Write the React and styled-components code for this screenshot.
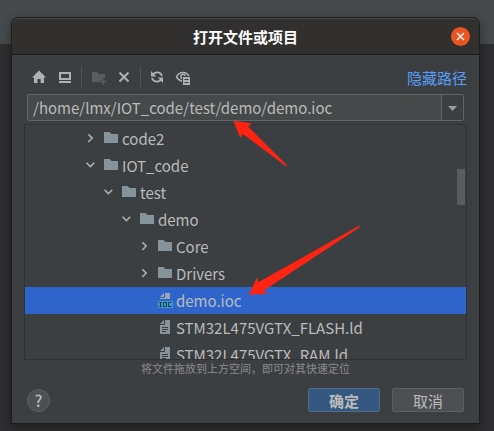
import React from 'react';
import styled, { createGlobalStyle } from 'styled-components';

const Global = createGlobalStyle`
  * { box-sizing: border-box; }
  body { margin: 0; overflow: hidden; }
`;

const Desktop = styled.div`
  position: relative;
  width: 494px;
  height: 431px;
  padding: 18px 0 0 12px;
  overflow: hidden;
  background: linear-gradient(#45494b 0 44px, #2e2e30 44px);
  font-family: 'Noto Sans CJK SC', sans-serif;
  font-size: 15px;
  color: #bbbbbb;
`;

const Dialog = styled.section`
  width: 467px;
  height: 405px;
  display: flex;
  flex-direction: column;
  background: #3c3f41;
  border-radius: 7px 7px 0 0;
  box-shadow: 0 0 0 1px #1d1d1e, 0 3px 10px 2px rgba(0, 0, 0, 0.3);
`;

const TitleBar = styled.header`
  height: 37px;
  flex: none;
  display: grid;
  grid-template-columns: 37px 1fr 37px;
  align-items: center;
  justify-items: center;
  background: #322f2f;
  border-top: 1px solid #484646;
  border-bottom: 1px solid #1c1b1b;
  border-radius: 7px 7px 0 0;
`;

const Title = styled.h1`
  grid-column: 2;
  margin: 1px 0 0;
  font-size: 15px;
  line-height: 22px;
  font-weight: 700;
  color: #ffffff;
`;

const Close = styled.button`
  width: 19px;
  height: 19px;
  margin: 0 0 1px;
  padding: 0;
  display: grid;
  place-items: center;
  border: 0;
  border-radius: 50%;
  background: #e95420;
`;

const Content = styled.div`
  flex: 1;
  min-height: 0;
  display: flex;
  flex-direction: column;
  padding: 0 12px;
`;

const Toolbar = styled.div`
  height: 39px;
  flex: none;
  display: flex;
  align-items: center;
  padding-top: 5px;
`;

const Tool = styled.span`
  width: 16px;
  height: 16px;
  margin-left: ${(p) => p.$gap}px;
  display: block;
  color: ${(p) => (p.$disabled ? '#5c5c5d' : '#afb1b3')};
  svg { display: block; }
`;

const Separator = styled.i`
  width: 1px;
  height: 20px;
  margin-left: ${(p) => p.$gap}px;
  background: #515355;
`;

const PathLink = styled.a`
  margin: 1px 0 0 auto;
  line-height: 22px;
  color: #589df6;
`;

const PathField = styled.div`
  height: 27px;
  flex: none;
  margin: 0 3px;
  display: flex;
  border: 1px solid #646464;
  border-radius: 2px;
  background: #45494a;
`;

const PathText = styled.span`
  flex: 1;
  padding-left: 5px;
  line-height: 25px;
  white-space: nowrap;
`;

const PathArrow = styled.span`
  width: 22px;
  padding-top: 2px;
  display: grid;
  place-items: center;
  border-left: 1px solid #646464;
  background: #3c3f41;
`;

const Tree = styled.div`
  height: 236px;
  flex: none;
  margin-top: 3px;
  display: flex;
  border: 1px solid #323232;
  position: relative;
`;

const Rows = styled.div`
  flex: 1;
  overflow: hidden;
`;

const Row = styled.div`
  height: 27px;
  display: flex;
  align-items: center;
  padding: 0 0 1px ${(p) => 57 + p.$depth * 18}px;
  background: ${(p) => (p.$selected ? '#2f65ca' : 'transparent')};
  svg { flex: none; }
`;

const Chevron = styled.span`
  width: 16px;
  height: 16px;
  margin-right: 5px;
  svg { display: block; }
`;

const Label = styled.span`
  margin: 2px 0 0 3px;
  line-height: 24px;
  white-space: nowrap;
`;

const Thumb = styled.i`
  position: absolute;
  right: 1px;
  top: 44px;
  width: 8px;
  height: 36px;
  background: #595b5d;
`;

const Hint = styled.p`
  margin: 0;
  text-align: center;
  font-size: 11px;
  line-height: 17px;
  color: #8c8c8c;
`;

const Footer = styled.footer`
  height: 24px;
  margin: 11px 3px 0;
  display: flex;
  align-items: center;
  gap: 12px;
`;

const Help = styled.button`
  width: 23px;
  height: 23px;
  margin: 0 auto 0 0;
  padding: 0;
  border: 1px solid #5e6060;
  border-radius: 50%;
  background: #4c5052;
  color: #bbbbbb;
  font: 500 16px/20px 'Noto Sans CJK SC', sans-serif;
`;

const Button = styled.button`
  width: 72px;
  height: 24px;
  padding: 2px 0 0;
  border: 1px solid ${(p) => (p.$primary ? '#4c708c' : '#5e6060')};
  border-radius: 2px;
  background: ${(p) => (p.$primary ? '#365880' : '#4c5052')};
  color: #bbbbbb;
  font: ${(p) => (p.$primary ? 700 : 400)} 15px/20px 'Noto Sans CJK SC', sans-serif;
`;

const Annotations = styled.svg`
  position: absolute;
  inset: 0;
  pointer-events: none;
`;

const Icon = ({ children }) => (
  <svg width="16" height="16" viewBox="0 0 16 16" fill="currentColor">{children}</svg>
);

const HomeIcon = () => (
  <Icon><path d="M8 1.5 15 8.5H13V14H9.6V10H6.5V14H3V8.5H1Z" /></Icon>
);

const DesktopIcon = () => (
  <Icon><path fillRule="evenodd" d="M2 3H14V11H2ZM4 5V9H12V5ZM2 12H14V14H2Z" /></Icon>
);

const NewFolderIcon = () => (
  <Icon>
    <path d="M1 3H6L8 5H14V9H11V11H9V13H1Z" />
    <path d="M11.2 9.5H12.8V11.7H15V13.3H12.8V15.5H11.2V13.3H9V11.7H11.2Z" />
  </Icon>
);

const DeleteIcon = () => (
  <Icon><path d="M3.5 3.5 12.5 12.5M12.5 3.5 3.5 12.5" stroke="currentColor" strokeWidth="2" /></Icon>
);

const RefreshIcon = () => (
  <Icon>
    <path d="M3.6 6.5A5 5 0 0 1 13 7M12.4 9.5A5 5 0 0 1 3 9" fill="none" stroke="currentColor" strokeWidth="1.8" />
    <path d="M2 2V7.5H7.3ZM14 14V8.5H8.7Z" />
  </Icon>
);

const ShowHiddenIcon = () => (
  <Icon>
    <path d="M7 13C4.2 12.6 1.8 10.5.6 7.8 2 4.9 4.6 2.8 8 2.8S13.4 4.4 14.8 7H12.9C11.8 5.3 10.1 4.3 8 4.3 5.4 4.3 3.5 5.7 2.4 7.8 3.4 9.7 5 10.9 7 11.3Z" />
    <path d="M7 10.4A3 3 0 1 1 10.9 7H9.3A1.4 1.4 0 1 0 7 8.5Z" />
    <path fillRule="evenodd" d="M8 8H15V16H8ZM9.5 10V11H13.5V10ZM9.5 13V14H13.5V13Z" />
  </Icon>
);

const FolderIcon = () => (
  <svg width="16" height="16" viewBox="0 0 16 16">
    <path d="M1 2H6.5L8.5 4H15V13H1Z" fill="#87939a" />
  </svg>
);

const FileIcon = () => (
  <svg width="16" height="16" viewBox="0 0 16 16">
    <path d="M7 1V5H3Z" fill="#87939a" />
    <path fillRule="evenodd" d="M8 1H13V15H3V6H8ZM5 8V9H11V8ZM5 10V11H11V10ZM5 12V13H9V12Z" fill="#87939a" />
  </svg>
);

const IocIcon = () => (
  <svg width="16" height="16" viewBox="0 0 16 16">
    <path d="M7 1V5H3ZM8 1H13V7H3V6H8Z" fill="#9aa7b0" />
    <path d="M1 9H16V16H1Z" fill="#3a9bcf" />
    <path d="M2 10.5H5M3.5 10.5V14.5M2 14.5H5M6.5 10.5H9.5V14.5H6.5ZM14.5 10.5H11.5V14.5H14.5" fill="none" stroke="#203b4c" />
  </svg>
);

const icons = { folder: FolderIcon, file: FileIcon, ioc: IocIcon };

const entries = [
  { name: 'code2', depth: 0, kind: 'folder' },
  { name: 'IOT_code', depth: 0, kind: 'folder', open: true },
  { name: 'test', depth: 1, kind: 'folder', open: true },
  { name: 'demo', depth: 2, kind: 'folder', open: true },
  { name: 'Core', depth: 3, kind: 'folder' },
  { name: 'Drivers', depth: 3, kind: 'folder' },
  { name: 'demo.ioc', depth: 3, kind: 'ioc', selected: true },
  { name: 'STM32L475VGTX_FLASH.ld', depth: 3, kind: 'file' },
  { name: 'STM32L475VGTX_RAM.ld', depth: 3, kind: 'file' },
];

const TreeRow = ({ name, depth, kind, open, selected }) => {
  const Kind = icons[kind];
  return (
    <Row $depth={depth} $selected={selected}>
      <Chevron>
        {kind === 'folder' && (
          <svg width="16" height="16" viewBox="0 0 16 16" fill="none" stroke="#adadad" strokeWidth="1.6">
            <path d={open ? 'M4.5 5.7 8.4 9.6 12.3 5.7' : 'M6.3 4.2 10.2 8.1 6.3 12'} />
          </svg>
        )}
      </Chevron>
      <Kind />
      <Label>{name}</Label>
    </Row>
  );
};

export default function App() {
  return (
    <Desktop>
      <Global />
      <Dialog>
        <TitleBar>
          <Title>打开文件或项目</Title>
          <Close aria-label="关闭">
            <svg width="9" height="9" viewBox="0 0 9 9" stroke="#fff" strokeWidth="1.4">
              <path d="M1 1 8 8M8 1 1 8" />
            </svg>
          </Close>
        </TitleBar>
        <Content>
          <Toolbar>
            <Tool $gap={7}><HomeIcon /></Tool>
            <Tool $gap={10}><DesktopIcon /></Tool>
            <Separator $gap={8} />
            <Tool $gap={9} $disabled><NewFolderIcon /></Tool>
            <Tool $gap={9}><DeleteIcon /></Tool>
            <Separator $gap={8} />
            <Tool $gap={8}><RefreshIcon /></Tool>
            <Tool $gap={10}><ShowHiddenIcon /></Tool>
            <PathLink>隐藏路径</PathLink>
          </Toolbar>
          <PathField>
            <PathText>/home/lmx/IOT_code/test/demo/demo.ioc</PathText>
            <PathArrow>
              <svg width="9" height="5" viewBox="0 0 9 5"><path d="M0 0H9L4.5 5Z" fill="#9a9c9e" /></svg>
            </PathArrow>
          </PathField>
          <Tree>
            <Rows>{entries.map((e) => <TreeRow key={e.name} {...e} />)}</Rows>
            <Thumb />
          </Tree>
          <Hint>将文件拖放到上方空间，即可对其快速定位</Hint>
          <Footer>
            <Help>?</Help>
            <Button $primary>确定</Button>
            <Button>取消</Button>
          </Footer>
        </Content>
      </Dialog>
      <Annotations width="494" height="431" fill="#ff2312">
        <path d="M233.3 120.7 252.3 123.5 248 126.5 287 165.3 286 166.2 243 134 240.3 137.7Z" />
        <path d="M248.7 294.7 257.3 277 258.3 282.3 359 225.7 360 227 263.5 290.8 267.7 293.7Z" />
      </Annotations>
    </Desktop>
  );
}
